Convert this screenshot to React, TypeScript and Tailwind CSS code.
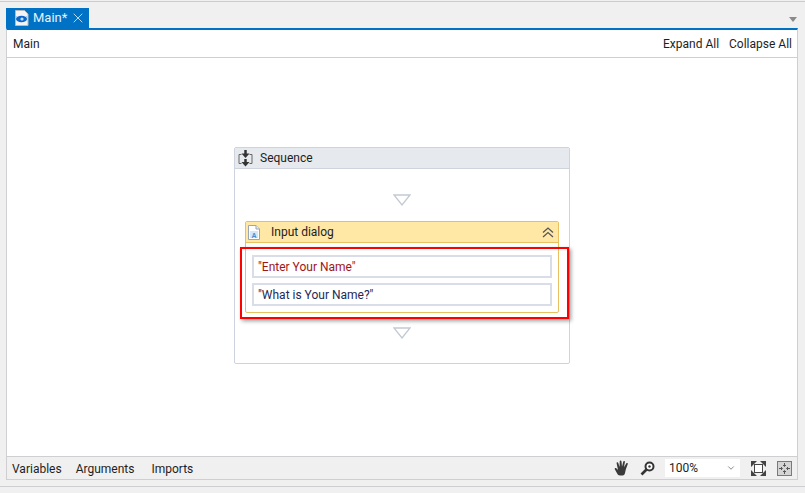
import React from "react";
import { ChevronDown, X } from "lucide-react";

const font = { fontFamily: 'Roboto, "Open Sans", sans-serif' };

const DocIcon = () => (
  <svg width="16" height="18" viewBox="0 0 16 18">
    <path d="M1.500 1.500h9l3.500 3.500v11.500h-12.500z" fill="#f4f4f4" stroke="#b9b9b9" />
    <ellipse cx="7.500" cy="10" rx="5.500" ry="3.200" fill="#0a66c8" />
    <circle cx="8" cy="10" r="1.600" fill="#bfe0ff" />
    <path d="M3 7l-1 2M12 7l1 2" stroke="#8fc2ef" />
  </svg>
);

const SequenceIcon = () => (
  <svg width="15" height="17" viewBox="0 0 15 17">
    <path d="M3.500 4.500H1v9h2.500M11.500 4.500H14v9h-2.500" fill="none" stroke="#666" />
    <path d="M7.500 0v4" stroke="#333" strokeWidth="2.500" />
    <path d="M3.500 3.500h8l-4 4.500z" fill="#333" />
    <path d="M7.500 9v4" stroke="#333" strokeWidth="2.500" />
    <path d="M3.500 12h8l-4 4.500z" fill="#333" />
  </svg>
);

const InputIcon = () => (
  <svg width="12" height="15" viewBox="0 0 12 15">
    <path d="M.5.5h7.500l3.500 3.500v10.500h-11z" fill="#fff" stroke="#9aa5b5" />
    <path d="M8 .5v3.500h3.500" fill="#e8ecf2" stroke="#9aa5b5" />
    <rect x="2" y="6" width="8" height="7" fill="#d5e8f8" />
    <text x="6" y="12.500" textAnchor="middle" fontSize="7" fontWeight="700" fill="#3d8fd1" fontFamily="Liberation Sans, sans-serif">A</text>
  </svg>
);

const CollapseIcon = () => (
  <svg width="12" height="11" viewBox="0 0 12 11">
    <path d="M1 5.500L6 1l5 4.500M1 10L6 5.500l5 4.500" fill="none" stroke="#555" strokeWidth="1.300" />
  </svg>
);

const Arrow = () => (
  <svg width="18" height="12" viewBox="0 0 18 12" className="block">
    <path d="M1 1h16l-8 10z" fill="#fff" stroke="#c3c9d3" strokeWidth="1.300" />
  </svg>
);

const HandIcon = () => (
  <svg width="16" height="16" viewBox="0 0 16 16">
    <path
      d="M6 15.500c-1.500 0-2.200-1-3-2.300L.8 9.300c-.5-1 .7-1.800 1.500-1L4 10 2.600 3.300c-.2-1.200 1.400-1.500 1.700-.4L5.600 7 5.700 1.500c0-1.300 1.700-1.300 1.800 0L8 6.800 9.200 1.800c.3-1.200 1.900-.9 1.700.3L10 7.200l2.200-3.800c.6-1 2-.3 1.500.8L11.800 9.500 11 13c-.3 1.500-1 2.500-2.500 2.500z"
      fill="#3a3a3a"
    />
  </svg>
);

const ZoomIcon = () => (
  <svg width="15" height="15" viewBox="0 0 15 15">
    <circle cx="9.500" cy="5.500" r="4" fill="#fff" stroke="#333" strokeWidth="2" />
    <circle cx="9.500" cy="5.500" r="1.200" fill="#333" />
    <path d="M6.500 8.500L1.500 13.500" stroke="#333" strokeWidth="2.600" />
  </svg>
);

const FitIcon = () => (
  <svg width="15" height="15" viewBox="0 0 15 15">
    <rect x="3.500" y="3.500" width="8" height="8" fill="#fff" stroke="#444" />
    <path d="M0 0h6L0 6zM15 0v6L9 0zM0 15V9l6 6zM15 15H9l6-6z" fill="#444" />
  </svg>
);

const ActualIcon = () => (
  <div className="flex h-[15px] w-[15px] items-center justify-center border border-[#7a7a7a] bg-[#d4d4d4]">
    <svg width="13" height="13" viewBox="0 0 13 13">
      <path d="M6.500 1v3M5 3l1.500 1.500L8 3M6.500 12V9M5 10l1.500-1.500L8 10M1 6.500h3M3 5l1.500 1.500L3 8M12 6.500H9M10 5L8.500 6.500 10 8" fill="none" stroke="#555" />
    </svg>
  </div>
);

function TextField({ value, color }: { value: string; color: string }) {
  return (
    <div className={`flex h-[23px] items-center border-2 border-[#d9dde8] bg-white pl-[4px] text-[12px] ${color}`}>
      {value}
    </div>
  );
}

export default function App() {
  return (
    <div className="flex h-[493px] w-[805px] flex-col overflow-hidden bg-[#f0f0f0] pt-px text-[12px] text-[#1e1e1e]" style={font}>
      <div className="h-px bg-[#cccccc]" />

      {/* Tabs */}
      <div className="flex h-[26px] shrink-0 items-end justify-between pl-[6px] pr-[7px]">
        <div className="flex h-[20px] w-[83px] items-center bg-[#0072c6] pl-[8px] text-[13px] text-white">
          <DocIcon />
          <span className="ml-[3px] text-[#e4f1fb]">Main*</span>
          <X size={16} strokeWidth={1.300} className="ml-[3px] text-[#d5e8f7]" />
        </div>
        <div className="mb-[6px] mr-[1px] h-0 w-0 border-x-[4px] border-t-[5px] border-x-transparent border-t-[#8a8a8a]" />
      </div>

      {/* Designer panel */}
      <div className="ml-[6px] flex h-[452px] w-[792px] flex-col border-x border-b border-t-2 border-x-[#cfcfd2] border-b-[#cfcfd2] border-t-[#0072c6] bg-white">
        <div className="mt-px flex h-[27px] shrink-0 items-center justify-between border-b border-[#cfcfd2] pl-[6px] pr-[5px]">
          <span>Main</span>
          <div className="flex gap-[10px]">
            <span>Expand All</span>
            <span>Collapse All</span>
          </div>
        </div>

        {/* Canvas */}
        <div className="flex flex-1 justify-center pt-[89px]">
          <div className="flex h-[217px] w-[336px] flex-col rounded-[2px] border border-[#cfd3de] bg-white">
            <div className="flex h-[21px] items-center gap-[7px] border-b border-[#cfd3de] bg-[#e6e9ed] pl-[3px]">
              <SequenceIcon />
              <span>Sequence</span>
            </div>
            <div className="flex justify-center pt-[25px]">
              <Arrow />
            </div>
            <div className="relative mx-[10px] mt-[15px] flex h-[92px] flex-col rounded-[2px] border border-[#e8c060]">
              <div className="flex h-[21px] shrink-0 items-center border-b border-[#e8c060] bg-[#ffe8a6] pl-[2px] pr-[4px]">
                <InputIcon />
                <span className="ml-[11px]">Input dialog</span>
                <div className="ml-auto">
                  <CollapseIcon />
                </div>
              </div>
              <div className="flex flex-col gap-[5px] px-[6px] pt-[12px]">
                <TextField value={'"Enter Your Name"'} color="text-[#a31515]" />
                <TextField value={'"What is Your Name?"'} color="text-[#1e2a55]" />
              </div>
              {/* Annotation drawn over the screenshot */}
              <div className="absolute left-[-6px] top-[25px] h-[72px] w-[329px] border-[2px] border-[#ff0000] shadow-[2px_2px_4px_rgba(0,0,0,0.4)]" />
            </div>
            <div className="flex justify-center pt-[14px]">
              <Arrow />
            </div>
          </div>
        </div>

        {/* Status bar */}
        <div className="flex h-[23px] shrink-0 items-center border-t border-[#cfcfd2] bg-[#f0f0f0] pl-[5px] pr-[5px]">
          <div className="flex items-center pt-[2px]">
            <span>Variables</span>
            <span className="ml-[14px]">Arguments</span>
            <span className="ml-[17px]">Imports</span>
          </div>
          <div className="ml-auto flex items-center">
            <HandIcon />
            <div className="ml-[10px]">
              <ZoomIcon />
            </div>
            <div className="ml-[10px] flex h-[18px] w-[75px] items-center justify-between bg-white pl-[4px] pr-[4px]">
              <span>100%</span>
              <ChevronDown size={10} strokeWidth={1.500} className="text-[#444]" />
            </div>
            <div className="ml-[11px]">
              <FitIcon />
            </div>
            <div className="ml-[11px]">
              <ActualIcon />
            </div>
          </div>
        </div>
      </div>

      <div className="mt-[6px] h-px shrink-0 bg-[#cfcfd2]" />
    </div>
  );
}
